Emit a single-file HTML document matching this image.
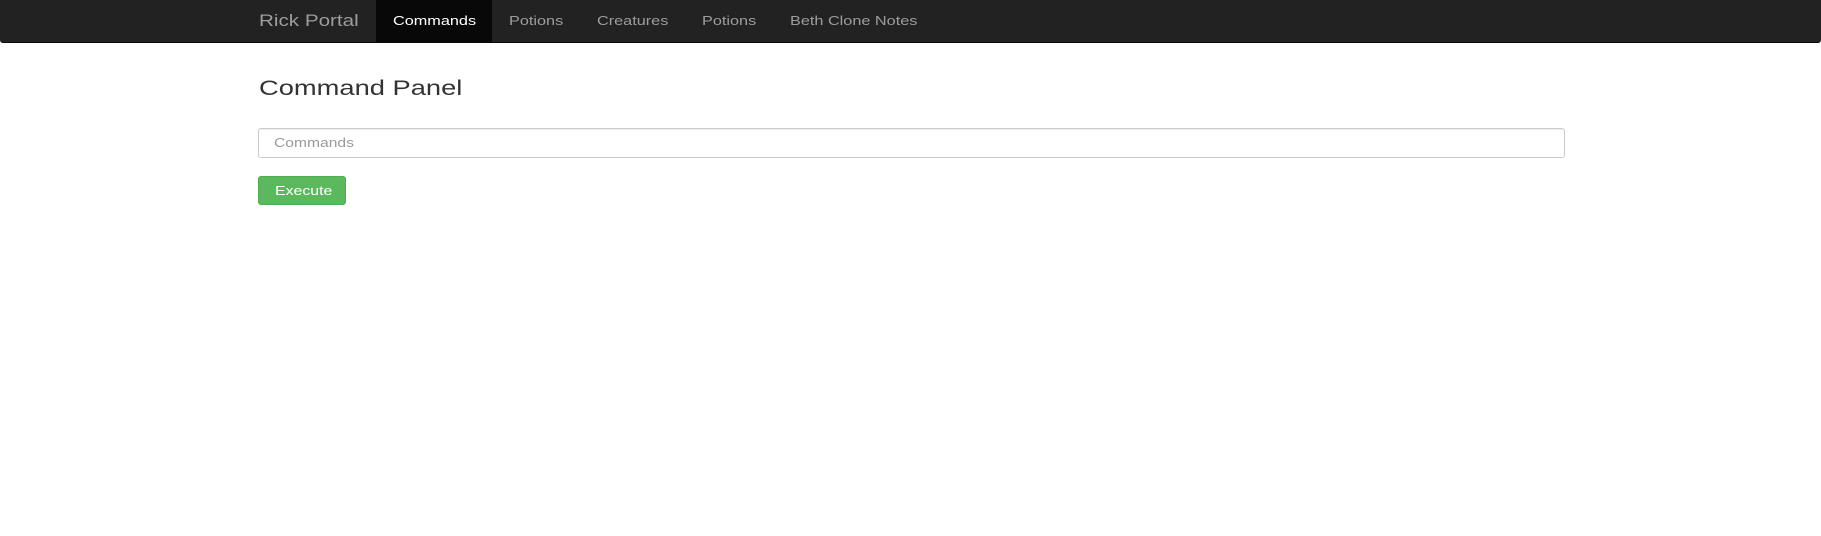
<!DOCTYPE html>
<html><head><meta charset="utf-8"><style>
*{box-sizing:border-box;margin:0;padding:0}
body{width:1821px;height:536px;background:#fff;font-family:"Liberation Sans",Arial,sans-serif;position:relative;overflow:hidden}
.nav{position:absolute;left:0;top:0;width:1821px;height:43px;background:#222;border-bottom:1px solid #080808;border-radius:0 0 3px 3px}
.nav>span{position:absolute;top:0;line-height:42px;font-size:13px;color:#9d9d9d;white-space:nowrap}
.s{display:inline-block;transform:scaleX(1.25);transform-origin:left center}
.nav>span.brand{font-size:16.5px;color:#9d9d9d}
.nav>span.active{background:#080808;color:#fff;padding:0 17px}
h3{position:absolute;left:259px;top:77px;font-size:21px;font-weight:500;color:#333;transform:scaleX(1.3);transform-origin:left center;white-space:nowrap}
.inp{position:absolute;left:258px;top:128px;width:1307px;height:30px;border:1px solid #ccc;border-radius:3px;box-shadow:inset 0 1px 1px rgba(0,0,0,.075);font-size:12.5px;color:#999;padding-left:15px;line-height:28px}
.btn{position:absolute;left:258px;top:176px;width:88px;height:29px;background:#5cb85c;border:1px solid #4cae4c;border-radius:3px;color:#fff;font-size:13px;line-height:27px;padding-left:16px}
</style></head><body>
<div class="nav">
<span class="brand" style="left:259px"><span class="s">Rick Portal</span></span>
<span class="active" style="left:376px;width:116px"><span class="s">Commands</span></span>
<span style="left:509px"><span class="s">Potions</span></span>
<span style="left:597px"><span class="s">Creatures</span></span>
<span style="left:702px"><span class="s">Potions</span></span>
<span style="left:790px"><span class="s">Beth Clone Notes</span></span>
</div>
<h3>Command Panel</h3>
<div class="inp"><span class="s">Commands</span></div>
<div class="btn"><span class="s" style="transform:scaleX(1.22)">Execute</span></div>
</body></html>
